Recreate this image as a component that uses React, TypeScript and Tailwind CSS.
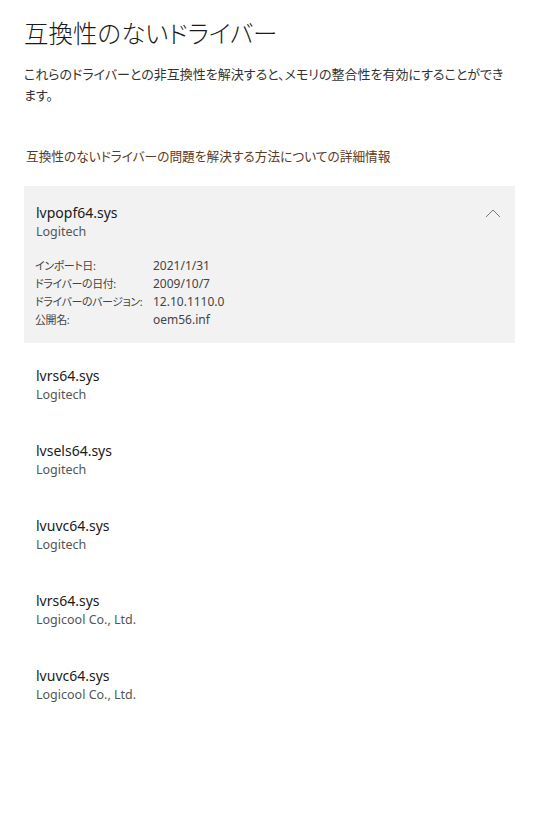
import React from "react";

const jp = "font-['Noto_Sans','Noto_Sans_CJK_JP',sans-serif] [font-feature-settings:'palt']";

const items = [
  { name: "lvrs64.sys", vendor: "Logitech" },
  { name: "lvsels64.sys", vendor: "Logitech" },
  { name: "lvuvc64.sys", vendor: "Logitech" },
  { name: "lvrs64.sys", vendor: "Logicool Co., Ltd." },
  { name: "lvuvc64.sys", vendor: "Logicool Co., Ltd." },
];

const details = [
  ["インポート日:", "2021/1/31"],
  ["ドライバーの日付:", "2009/10/7"],
  ["ドライバーのバージョン:", "12.10.1110.0"],
  ["公開名:", "oem56.inf"],
];

export default function App() {
  return (
    <div className={`w-[547px] h-[816px] bg-white ${jp} pl-6 pr-8`}>
      <h1 className="pt-[17px] text-[24.5px] leading-[34px] font-light text-[#1a1a1a] whitespace-nowrap">
        互換性のないドライバー
      </h1>
      <p className="mt-[13px] text-[13px] leading-[21px] text-[#333]">
        これらのドライバーとの非互換性を解決すると、メモリの整合性を有効にすることができます。
      </p>
      <div className="mt-[40px] pl-[2px] text-[12.7px] leading-[20px] text-[#5b3a22] whitespace-nowrap">
        互換性のないドライバーの問題を解決する方法についての詳細情報
      </div>
      <div className="mt-[20px] flex flex-col gap-[6px]">
        <div className="bg-[#f2f2f2] pl-3 pr-[14px] pt-[17px] pb-[14px]">
          <div className="flex justify-between items-start">
            <div>
              <div className="text-[14px] leading-[20px] text-[#1a1a1a]">lvpopf64.sys</div>
              <div className="text-[12.5px] leading-[18px] text-[#555]">Logitech</div>
            </div>
            <svg width="16" height="10" viewBox="0 0 16 10" className="mt-[5px]">
              <path d="M1 9 L8 2 L15 9" fill="none" stroke="#777" strokeWidth="1" />
            </svg>
          </div>
          <div className="mt-[16px] grid grid-cols-[117px_1fr] leading-[18px] text-[#444]">
            {details.map(([k, v]) => (
              <React.Fragment key={k}>
                <div className="-ml-[1px] whitespace-nowrap text-[11px] tracking-[-0.4px]">{k}</div>
                <div className="text-[12px]">{v}</div>
              </React.Fragment>
            ))}
          </div>
        </div>
        {items.map((it, i) => (
          <div key={i} className="h-[69px] pl-3 pt-[17px]">
            <div className="text-[14px] leading-[20px] text-[#1a1a1a]">{it.name}</div>
            <div className="text-[12.5px] leading-[18px] text-[#555]">{it.vendor}</div>
          </div>
        ))}
      </div>
    </div>
  );
}
